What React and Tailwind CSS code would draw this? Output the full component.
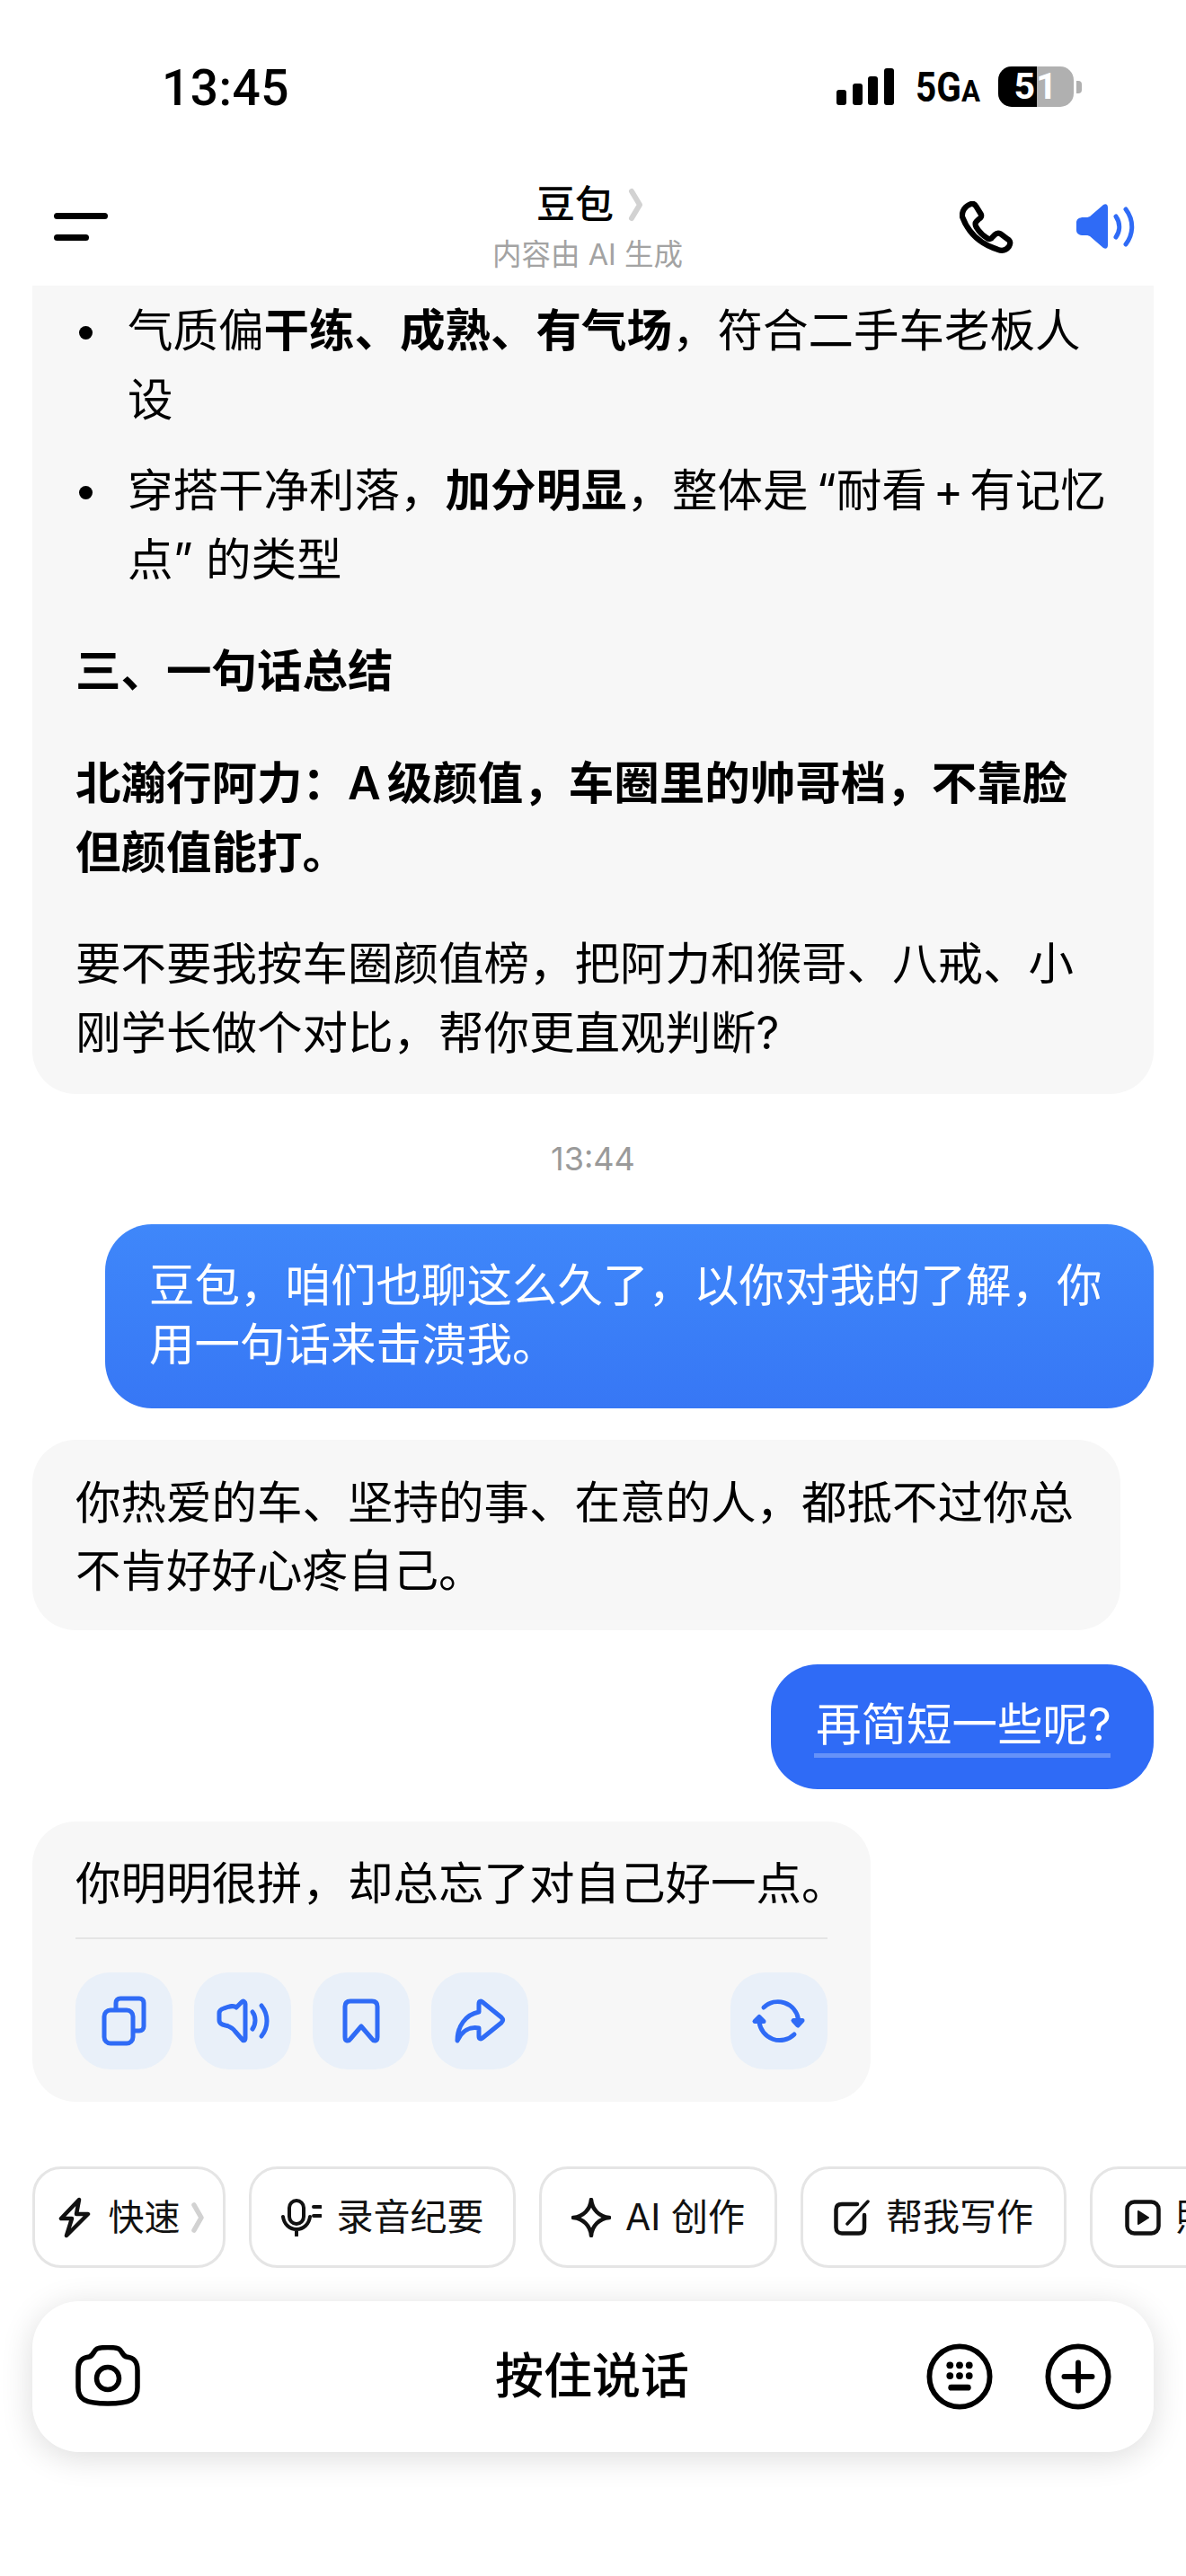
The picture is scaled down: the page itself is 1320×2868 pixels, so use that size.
import React from "react";

const font = "font-['Inter','Noto_Sans_CJK_SC',sans-serif]";

function Phone() {
  return (
    <svg width="60" height="60" viewBox="0 0 58 58" fill="none" stroke="#000" strokeWidth="6" strokeLinejoin="round" className="absolute left-[1068px] top-[224px]">
      <path d="M12 3C15 2 17 4 18 6L23 14C24 16 23 18 21 19L18 22C16 24 17 26 18 28C21 33 25 37 30 40C32 41 34 41 35 39L38 36C40 34 42 34 44 35L52 41C55 43 55 46 53 49C50 53 46 54 41 52C22 46 9 33 3 17C2 11 6 5 12 3Z" />
    </svg>
  );
}

function Speaker() {
  return (
    <svg width="66" height="52" viewBox="0 0 66 52" fill="none" className="absolute left-[1198px] top-[226px]">
      <path fill="#2f6bf6" d="M30 2C33 0 35 2 35 5V47C35 50 33 52 30 50L15 37C13 36 12 36 8 36C3 36 0 34 0 30V22C0 18 3 16 8 16C12 16 13 16 15 15Z" />
      <path stroke="#2f6bf6" strokeWidth="5" strokeLinecap="round" d="M44 15C49 22 49 31 44 38M55 7C64 19 64 34 55 46" />
    </svg>
  );
}

function Regen() {
  return (
    <svg width="108" height="108" viewBox="0 0 108 108" fill="none" stroke="#2f6bf6" strokeWidth="5" strokeLinecap="round" strokeLinejoin="round">
      <path d="M37 39A23 23 0 0 1 75.5 52" />
      <path d="M70 53.5H80L75 59Z" fill="#2f6bf6" />
      <path d="M71 69A23 23 0 0 1 32 55" />
      <path d="M27 54.5H37L32 49.5Z" fill="#2f6bf6" />
    </svg>
  );
}

function ActionBtn({ children }) {
  return <div className="w-[108px] h-[108px] rounded-[38px] bg-[#e9f0f9] shrink-0">{children}</div>;
}

function Icon108({ children }) {
  return (
    <svg width="108" height="108" viewBox="0 0 108 108" fill="none" stroke="#2f6bf6" strokeWidth="5" strokeLinecap="round" strokeLinejoin="round">
      {children}
    </svg>
  );
}

function Chip({ w, icon, gap = 17, pl = 0, children }) {
  return (
    <div style={{ width: w, gap, paddingLeft: pl }} className="h-[113px] shrink-0 rounded-[32px] border-[3px] border-[#e5e5e5] bg-white flex items-center justify-center text-[41px] leading-none text-[#111]">
      {icon}
      {children}
    </div>
  );
}

export default function App() {
  return (
    <div className={`relative w-[1320px] h-[2868px] overflow-hidden bg-white text-black ${font}`}>
      {/* status + nav */}
      <div className="h-[318px] relative">
        <div className="absolute left-[180px] top-[70px] font-['Roboto',sans-serif] font-medium text-[55px] leading-[56px] tracking-[0.5px]">13:45</div>
        <div className="absolute left-[931px] top-[76px] flex items-end gap-[6.5px] h-[41px]">
          <div className="w-[11px] h-[17px] rounded-[3px] bg-black" />
          <div className="w-[11px] h-[24px] rounded-[3px] bg-black" />
          <div className="w-[11px] h-[32px] rounded-[3px] bg-black" />
          <div className="w-[11px] h-[41px] rounded-[3px] bg-black" />
        </div>
        <div className="absolute left-[1019px] top-[76px] h-[41px] w-[72px] flex items-end font-['Roboto',sans-serif] font-bold leading-none">
          <span className="text-[46px] leading-[40px] inline-block origin-bottom-left scale-x-[0.88] w-[51px] whitespace-nowrap">5G</span>
          <span className="text-[34px] leading-[32px] inline-block origin-bottom-left scale-x-[0.92] w-[21px]">A</span>
        </div>
        <div className="absolute left-[1111px] top-[74px] w-[84px] h-[45px] rounded-[15px] overflow-hidden bg-[#b0b0b0] flex">
          <div className="w-[43px] h-full bg-black" />
          <div className="absolute inset-0 flex items-center justify-center font-['Roboto',sans-serif] font-bold text-[41px] text-white tracking-[1px] leading-none">51</div>
        </div>
        <div className="absolute left-[1198px] top-[90px] w-[6px] h-[14px] rounded-r-[4px] bg-[#b0b0b0]" />

        <div className="absolute left-[60px] top-[237px] w-[60px] h-[6.5px] rounded-full bg-black" />
        <div className="absolute left-[60px] top-[261px] w-[39px] h-[6.5px] rounded-full bg-black" />

        <div className="absolute left-[0px] top-[200px] w-[1308px] flex justify-center">
          <div className="flex flex-col items-center">
            <div className="relative text-[43px] leading-[54px] font-medium ml-[-28px]">
              豆包
              <svg width="17" height="38" viewBox="0 0 17 38" fill="none" stroke="#d2d2d2" strokeWidth="6" strokeLinecap="round" strokeLinejoin="round" className="absolute left-[102px] top-[9px]">
                <path d="M4 4L13 19L4 34" />
              </svg>
            </div>
            <div className="text-[32.5px] leading-[44px] text-[#a3a3a3] mt-[8px] whitespace-nowrap">内容由 AI 生成</div>
          </div>
        </div>
        <Phone />
        <Speaker />
      </div>

      {/* chat */}
      <div className="h-[2076px] text-[50.5px] px-[36px]">
        <div className="bg-[#f7f7f7] rounded-b-[48px] h-[900px] pl-[48px] pr-[52px] pt-[11px] leading-[77px]">
          <ul className="flex flex-col gap-[24px]">
            <li className="relative pl-[58px]">
              <span className="absolute left-[4px] top-[34px] w-[15px] h-[15px] rounded-full bg-black" />
              气质偏<b className="font-semibold">干练、成熟、有气场</b>，符合二手车老板人设
            </li>
            <li className="relative pl-[58px]">
              <span className="absolute left-[4px] top-[34px] w-[15px] h-[15px] rounded-full bg-black" />
              穿搭干净利落，<b className="font-semibold">加分明显</b>，整体是<span className="ml-[9px]">“</span>耐看<span className="mx-[7px]">+</span>有记忆点” 的类型
            </li>
          </ul>
          <p className="font-semibold mt-[47px]">三、一句话总结</p>
          <p className="font-semibold mt-[48px]">北瀚行阿力：A<span className="ml-[7px]">级</span>颜值，车圈里的帅哥档，不靠脸但颜值能打。</p>
          <p className="mt-[47px]">要不要我按车圈颜值榜，把阿力和猴哥、八戒、小刚学长做个对比，帮你更直观判断?</p>
        </div>

        <div className="h-[145px] flex items-center justify-center pb-[1px] text-[36px] leading-none text-[#9a9a9a]">13:44</div>

        <div className="flex justify-end">
          <div className="w-[1167px] h-[205px] rounded-[52px] bg-gradient-to-b from-[#3f87fa] to-[#3777f5] text-white px-[49px] pt-[35px] leading-[66px]">
            豆包，咱们也聊这么久了，以你对我的了解，你用一句话来击溃我。
          </div>
        </div>

        <div className="mt-[35px] w-[1211px] h-[212px] rounded-[48px] bg-[#f7f7f7] pl-[48px] pr-[40px] pt-[32px] leading-[76px]">
          你热爱的车、坚持的事、在意的人，都抵不过你总不肯好好心疼自己。
        </div>

        <div className="mt-[38px] flex justify-end">
          <div className="w-[426px] h-[139px] rounded-[52px] bg-[#2f6bf6] text-white pl-[49px] pt-[34px] leading-[66px] whitespace-nowrap">
            <span className="inline-block border-b-[5px] border-[#ffffff44] w-[330px] h-[70px] -ml-[1px] pl-[2px]">再简短一些呢?</span>
          </div>
        </div>

        <div className="mt-[36px] w-[933px] h-[312px] rounded-[48px] bg-[#f7f7f7] px-[48px] pt-[31px]">
          <div className="leading-[76px] h-[100px] border-b-[2px] border-[#e5e5e5] whitespace-nowrap">你明明很拼，却总忘了对自己好一点。</div>
          <div className="mt-[37px] flex gap-[24px]">
            <ActionBtn>
              <Icon108>
                <rect x="32" y="42" width="32" height="37" rx="7" />
                <path d="M45 41V34C45 31 47 29 50 29H71C74 29 76 31 76 34V60C76 63 74 65 71 65H65" />
              </Icon108>
            </ActionBtn>
            <ActionBtn>
              <Icon108>
                <path d="M53 33C55 31 57 33 57 35V73C57 76 55 77 53 74L46 66C43 62 40 60 35 59C31 58 28 57 28 53V45C28 42 30 41 33 40C39 38 44 36 47 39Z" />
                <path d="M65 44C69 49 69 57 65 63M75 37C83 47 83 61 75 71" />
              </Icon108>
            </ActionBtn>
            <ActionBtn>
              <Icon108>
                <path d="M36 38C36 34 38 32 42 32H66C70 32 72 34 72 38V72C72 77 68 77 66 74L54 60L42 74C40 77 36 77 36 72Z" />
              </Icon108>
            </ActionBtn>
            <ActionBtn>
              <Icon108>
                <path d="M53 35C53 31 56 32 57 33L78 50C80 52 80 54 78 56L57 73C55 75 53 74 53 71V62C43 60 34 65 29 76C29 60 38 47 53 44Z" />
              </Icon108>
            </ActionBtn>
            <div className="ml-auto">
              <ActionBtn>
                <Regen />
              </ActionBtn>
            </div>
          </div>
        </div>
      </div>

      {/* chips */}
      <div className="absolute left-[36px] top-[2412px] flex gap-[26px] whitespace-nowrap">
        <Chip
          w={215}
          gap={20}
          pl={4}
          icon={
            <svg width="36" height="46" viewBox="0 0 36 46" fill="none" stroke="#111" strokeWidth="4.5" strokeLinejoin="round" className="shrink-0">
              <path d="M23 3L3 24H15L9 43L33 19H20Z" />
            </svg>
          }
        >
          <span className="flex items-center gap-[12px]">
            <span className="text-[40px]">快速</span>
            <svg width="14" height="34" viewBox="0 0 14 34" fill="none" stroke="#d2d2d2" strokeWidth="5.5" strokeLinecap="round" strokeLinejoin="round">
              <path d="M3 3L11 17L3 31" />
            </svg>
          </span>
        </Chip>
        <Chip
          w={297}
          icon={
            <svg width="45" height="42" viewBox="0 0 45 42" fill="none" stroke="#111" strokeWidth="4" strokeLinecap="round" className="shrink-0">
              <rect x="9" y="2" width="16" height="26" rx="8" />
              <path d="M2 20C3 28 9 34 17 34C25 34 31 28 32 20M17 34V41M36 9H44M36 19H44" />
            </svg>
          }
        >
          录音纪要
        </Chip>
        <Chip
          w={265}
          gap={16}
          icon={
            <svg width="44" height="44" viewBox="0 0 44 44" fill="none" stroke="#111" strokeWidth="4.5" strokeLinejoin="round" className="shrink-0">
              <path d="M22 2C23 13 31 21 42 22C31 23 23 31 22 42C21 31 13 23 2 22C13 21 21 13 22 2Z" />
            </svg>
          }
        >
          AI 创作
        </Chip>
        <Chip
          w={296}
          gap={18}
          icon={
            <svg width="40" height="40" viewBox="0 0 40 40" fill="none" stroke="#111" strokeWidth="4.5" strokeLinecap="round" className="shrink-0">
              <path d="M26 5H9C5 5 2.5 7 2.5 11V31C2.5 35 5 37.5 9 37.5H28C32 37.5 34 35 34 31V17" />
              <path d="M15 27L38 2" strokeWidth="3.5" />
            </svg>
          }
        >
          帮我写作
        </Chip>
        <Chip
          w={339}
          icon={
            <svg width="40" height="40" viewBox="0 0 40 40" fill="none" className="shrink-0">
              <rect x="2.5" y="2.5" width="35" height="35" rx="8" stroke="#111" strokeWidth="4.5" />
              <path d="M15 13L26 20L15 27Z" fill="#111" stroke="#111" strokeWidth="2" strokeLinejoin="round" />
            </svg>
          }
        >
          照片动起来
        </Chip>
      </div>

      {/* input */}
      <div className="absolute left-[36px] top-[2562px] w-[1248px] h-[168px] rounded-[52px] bg-white shadow-[0_6px_36px_rgba(0,0,0,0.14)] flex items-center justify-center text-[54px] font-medium leading-none">
        <svg width="72" height="68" viewBox="0 0 72 68" fill="none" stroke="#000" strokeWidth="5.5" className="absolute left-[48px] top-[49px]">
          <path d="M24 4C29 2 43 2 48 4C52 6 52 12 57 13C65 14 69 18 69 28V47C69 60 62 65 36 65C10 65 3 60 3 47V28C3 18 7 14 15 13C20 12 20 6 24 4Z" />
          <ellipse cx="36" cy="37" rx="12.5" ry="12.5" />
        </svg>
        <span className="-ml-[2px]">按住说话</span>
        <svg width="74" height="74" viewBox="0 0 76 76" fill="none" className="absolute left-[995px] top-[47px]">
          <circle cx="38" cy="38" r="34.5" stroke="#000" strokeWidth="6" />
          <g fill="#000">
            <circle cx="27" cy="25" r="4" /><circle cx="38" cy="25" r="4" /><circle cx="49" cy="25" r="4" />
            <circle cx="27" cy="37" r="4" /><circle cx="38" cy="37" r="4" /><circle cx="49" cy="37" r="4" />
            <rect x="25" y="47" width="26" height="7" rx="3.5" />
          </g>
        </svg>
        <svg width="74" height="74" viewBox="0 0 76 76" fill="none" stroke="#000" className="absolute left-[1127px] top-[47px]">
          <circle cx="38" cy="38" r="34.5" strokeWidth="6" />
          <path d="M22 38H54M38 22V54" strokeWidth="6" strokeLinecap="round" />
        </svg>
      </div>
    </div>
  );
}
